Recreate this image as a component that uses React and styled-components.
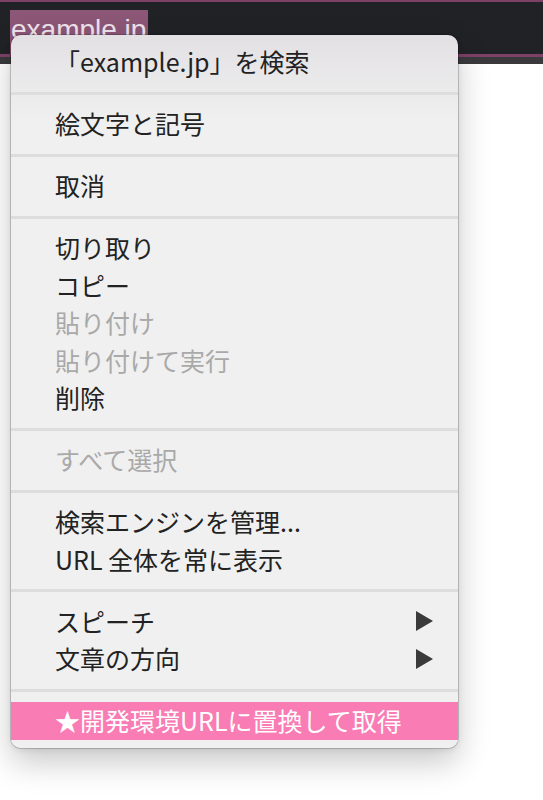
import React from "react";
import styled, { createGlobalStyle } from "styled-components";

const GlobalStyle = createGlobalStyle`
  html, body {
    margin: 0;
    padding: 0;
    background: #ffffff;
  }
  body {
    font-family: "Noto Sans CJK JP", "Liberation Sans", sans-serif;
  }
`;

const sections = [
  [{ label: "「example.jp」を検索" }],
  [{ label: "絵文字と記号" }],
  [{ label: "取消" }],
  [
    { label: "切り取り" },
    { label: "コピー" },
    { label: "貼り付け", disabled: true },
    { label: "貼り付けて実行", disabled: true },
    { label: "削除" },
  ],
  [{ label: "すべて選択", disabled: true }],
  [{ label: "検索エンジンを管理..." }, { label: "URL 全体を常に表示" }],
  [
    { label: "スピーチ", submenu: true },
    { label: "文章の方向", submenu: true },
  ],
  [{ label: "★開発環境URLに置換して取得", highlight: true }],
];

const App = () => {
  return (
    <Page>
      <GlobalStyle />
      <TopBar>
        <Field>
          <Selection>example.jp</Selection>
        </Field>
        <AccentLine />
        <BottomEdge />
      </TopBar>
      <Menu>
        {sections.map((items, i) => (
          <React.Fragment key={i}>
            {i > 0 && <Separator />}
            {items.map((item) => (
              <Item key={item.label} $disabled={item.disabled} $highlight={item.highlight}>
                <span>{item.label}</span>
                {item.submenu && <Arrow />}
              </Item>
            ))}
          </React.Fragment>
        ))}
      </Menu>
    </Page>
  );
};

export default App;

const Page = styled.div`
  position: relative;
  width: 543px;
  height: 800px;
  overflow: hidden;
  background: #ffffff;
`;

const TopBar = styled.div`
  display: flex;
  flex-direction: column;
  background: #212226;
  border-top: 2px solid #7d4168;
`;

const Field = styled.div`
  height: 52px;
  padding: 8px 0 0 10px;
  box-sizing: border-box;
  display: flex;
  align-items: flex-start;
`;

const Selection = styled.div`
  height: 44px;
  padding: 0 2px 0 1px;
  background: #8c5676;
  color: #eee2ea;
  font-family: "Liberation Sans", Arial, sans-serif;
  font-size: 28px;
  line-height: 39px;
  overflow: hidden;
`;

const AccentLine = styled.div`
  height: 3px;
  background: #7d4168;
`;

const BottomEdge = styled.div`
  height: 7px;
  background: #3a3a3d;
`;

const Menu = styled.div`
  position: absolute;
  left: 11px;
  top: 35px;
  width: 447px;
  padding: 8px 0;
  box-sizing: border-box;
  border-radius: 10px;
  background: linear-gradient(#e2e0e3 0px, #ebeaeb 50px, #f0f0f0 90px, #f0f0f0 100%);
  box-shadow:
    0 0 0 1px rgba(0, 0, 0, 0.18),
    0 14px 32px rgba(0, 0, 0, 0.22),
    0 2px 6px rgba(0, 0, 0, 0.08);
  display: flex;
  flex-direction: column;
`;

const Item = styled.div`
  height: 37.5px;
  padding: 0 25px 0 44px;
  display: flex;
  align-items: center;
  justify-content: space-between;
  font-size: 25px;
  line-height: 1;
  white-space: nowrap;
  color: ${(p) => (p.$highlight ? "#ffffff" : p.$disabled ? "#a9a9a9" : "#222222")};
  background: ${(p) => (p.$highlight ? "#f97cb4" : "transparent")};
`;

const Separator = styled.div`
  height: 3px;
  margin: 11px 0 10.5px;
  background: #dedddd;
`;

const Arrow = styled.span`
  width: 0;
  height: 0;
  border-top: 10px solid transparent;
  border-bottom: 10px solid transparent;
  border-left: 17px solid #3a3a3a;
`;
